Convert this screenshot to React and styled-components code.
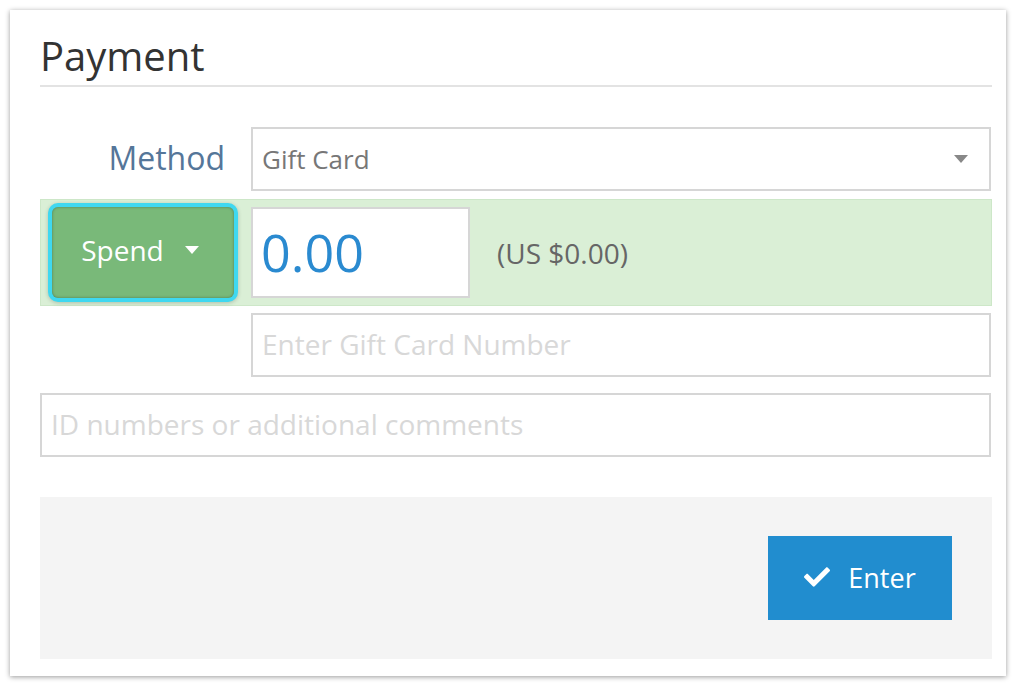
import React from 'react';
import styled, { createGlobalStyle } from 'styled-components';
import { FaCheck } from 'react-icons/fa';

const GlobalStyle = createGlobalStyle`
  html, body {
    margin: 0;
    padding: 0;
    background: #ffffff;
    font-family: "Open Sans", "Liberation Sans", sans-serif;
  }
  * { box-sizing: border-box; }
`;

const styles = {
  Page: styled.div`
    width: 1016px;
    height: 686px;
    padding: 10px;
  `,
  Panel: styled.div`
    width: 996px;
    height: 666px;
    background: #fff;
    box-shadow: 0 1px 5px rgba(0, 0, 0, 0.4);
    padding: 20px 14px 17px 30px;
    display: flex;
    flex-direction: column;
  `,
  Title: styled.h1`
    margin: 0;
    font-weight: 400;
    font-size: 40px;
    line-height: 52px;
    color: #333;
    border-bottom: 2px solid #e3e3e3;
    height: 57px;
  `,
  Row: styled.div`
    display: flex;
    align-items: center;
    margin-top: ${p => p.$gap || 0}px;
    padding-left: ${p => p.$indent || 0}px;
  `,
  Label: styled.label`
    width: 211px;
    text-align: right;
    padding-right: 26px;
    font-size: 32px;
    line-height: 40px;
    color: #557699;
    padding-bottom: 2px;
  `,
  Select: styled.div`
    flex: 1;
    height: 64px;
    border: 2px solid #d6d6d6;
    display: flex;
    align-items: center;
    justify-content: space-between;
    padding: 0 21px 0 9px;
    font-size: 26px;
    color: #777;
    margin-right: 1px;
  `,
  Caret: styled.span`
    width: 0;
    height: 0;
    border-left: 7px solid transparent;
    border-right: 7px solid transparent;
    border-top: 8px solid ${p => p.$color};
    display: inline-block;
  `,
  GreenRow: styled.div`
    margin-top: 8px;
    height: 107px;
    background: #daefd6;
    border: 1px solid #cde7c8;
    display: flex;
    align-items: center;
    padding-left: 7px;
  `,
  SpendRing: styled.div`
    width: 190px;
    height: 99px;
    border-radius: 10px;
    background: #3fd8f0;
    padding: 4px;
    box-shadow: 0 1px 4px rgba(0, 0, 0, 0.2);
  `,
  SpendButton: styled.button`
    width: 100%;
    height: 100%;
    border: none;
    border-radius: 6px;
    background: #79b979;
    box-shadow: inset 0 0 3px rgba(0, 0, 0, 0.35);
    color: #fff;
    font-family: inherit;
    font-size: 28px;
    display: flex;
    align-items: center;
    justify-content: center;
    gap: 21px;
    padding: 0 6px 6px 0;
  `,
  AmountBox: styled.div`
    margin-left: 13px;
    width: 219px;
    height: 91px;
    background: #fff;
    border: 2px solid #d6d6d6;
    display: flex;
    align-items: center;
    padding: 0 0 2px 8px;
    font-size: 52px;
    color: #2a8ad0;
  `,
  Converted: styled.span`
    margin-left: 27px;
    font-size: 28px;
    color: #666;
  `,
  Input: styled.div`
    flex: 1;
    height: 64px;
    border: 2px solid #d6d6d6;
    display: flex;
    align-items: center;
    padding: 0 0 2px 9px;
    font-size: 28px;
    color: #d8d8d8;
    margin-right: 1px;
  `,
  Footer: styled.div`
    margin-top: 40px;
    flex: 1;
    background: #f4f4f4;
    display: flex;
    justify-content: flex-end;
    align-items: flex-start;
    padding: 39px 40px 0 0;
  `,
  EnterButton: styled.button`
    width: 184px;
    height: 84px;
    border: none;
    background: #218dcf;
    color: #fff;
    font-family: inherit;
    font-size: 27px;
    display: flex;
    align-items: center;
    justify-content: center;
    gap: 18px;
    padding: 0 0 2px 0;
  `,
};

export default function App() {
  return (
    <styles.Page>
      <GlobalStyle />
      <styles.Panel>
        <styles.Title>Payment</styles.Title>
        <styles.Row $gap={40}>
          <styles.Label>Method</styles.Label>
          <styles.Select>
            <span>Gift Card</span>
            <styles.Caret $color="#888" />
          </styles.Select>
        </styles.Row>
        <styles.GreenRow>
          <styles.SpendRing>
            <styles.SpendButton>
              <span>Spend</span>
              <styles.Caret $color="#fff" />
            </styles.SpendButton>
          </styles.SpendRing>
          <styles.AmountBox>0.00</styles.AmountBox>
          <styles.Converted>(US $0.00)</styles.Converted>
        </styles.GreenRow>
        <styles.Row $gap={7} $indent={211}>
          <styles.Input>Enter Gift Card Number</styles.Input>
        </styles.Row>
        <styles.Row $gap={16}>
          <styles.Input>ID numbers or additional comments</styles.Input>
        </styles.Row>
        <styles.Footer>
          <styles.EnterButton>
            <FaCheck size={26} />
            <span>Enter</span>
          </styles.EnterButton>
        </styles.Footer>
      </styles.Panel>
    </styles.Page>
  );
}
